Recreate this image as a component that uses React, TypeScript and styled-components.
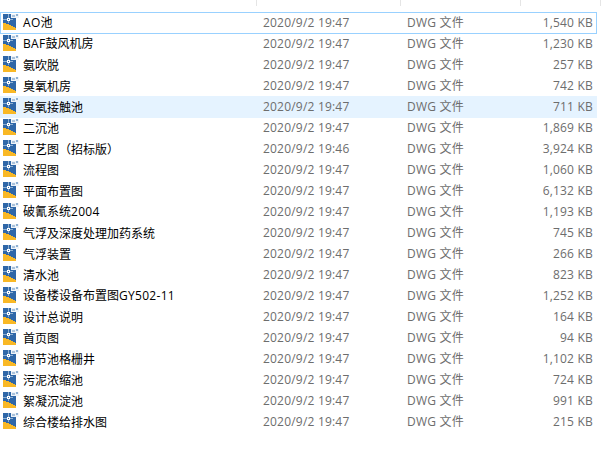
import * as React from "react";
import styled, { createGlobalStyle } from "styled-components";

interface FileRow {
	name: string;
	modified: string;
	size: string;
}

const files: FileRow[] = [
	{ name: "AO池", modified: "2020/9/2 19:47", size: "1,540 KB" },
	{ name: "BAF鼓风机房", modified: "2020/9/2 19:47", size: "1,230 KB" },
	{ name: "氨吹脱", modified: "2020/9/2 19:47", size: "257 KB" },
	{ name: "臭氧机房", modified: "2020/9/2 19:47", size: "742 KB" },
	{ name: "臭氧接触池", modified: "2020/9/2 19:47", size: "711 KB" },
	{ name: "二沉池", modified: "2020/9/2 19:47", size: "1,869 KB" },
	{ name: "工艺图（招标版）", modified: "2020/9/2 19:46", size: "3,924 KB" },
	{ name: "流程图", modified: "2020/9/2 19:47", size: "1,060 KB" },
	{ name: "平面布置图", modified: "2020/9/2 19:47", size: "6,132 KB" },
	{ name: "破氰系统2004", modified: "2020/9/2 19:47", size: "1,193 KB" },
	{ name: "气浮及深度处理加药系统", modified: "2020/9/2 19:47", size: "745 KB" },
	{ name: "气浮装置", modified: "2020/9/2 19:47", size: "266 KB" },
	{ name: "清水池", modified: "2020/9/2 19:47", size: "823 KB" },
	{ name: "设备楼设备布置图GY502-11", modified: "2020/9/2 19:47", size: "1,252 KB" },
	{ name: "设计总说明", modified: "2020/9/2 19:47", size: "164 KB" },
	{ name: "首页图", modified: "2020/9/2 19:47", size: "94 KB" },
	{ name: "调节池格栅井", modified: "2020/9/2 19:47", size: "1,102 KB" },
	{ name: "污泥浓缩池", modified: "2020/9/2 19:47", size: "724 KB" },
	{ name: "絮凝沉淀池", modified: "2020/9/2 19:47", size: "991 KB" },
	{ name: "综合楼给排水图", modified: "2020/9/2 19:47", size: "215 KB" },
];

const GlobalStyle = createGlobalStyle`
	html, body {
		background: #fff;
		height: 100%;
		margin: 0;
		overflow: hidden;
	}
`;

const Page = styled.div`
	box-sizing: border-box;
	font-family: "Noto Sans CJK SC", "Liberation Sans", sans-serif;
	font-size: 12px;
	height: 451px;
	width: 611px;
`;

const Header = styled.div`
	display: grid;
	grid-template-columns: 257px 144px 120px 80px;
	height: 6px;
	margin-bottom: 6px;
`;

const HeaderCell = styled.div`
	border-right: 1px solid #e5e5e5;
`;

const List = styled.div`
	display: flex;
	flex-direction: column;
	width: 597px;
`;

const Row = styled.div<{ $state?: "focused" | "hover" }>`
	align-items: center;
	background: ${(p) => (p.$state === "hover" ? "#e5f3ff" : "transparent")};
	border: 1px solid ${(p) => (p.$state === "focused" ? "#99d1ff" : "transparent")};
	box-sizing: border-box;
	display: grid;
	grid-template-columns: 253px 144px 114px 1fr;
	height: 22px;
	padding-bottom: 2px;
	padding-right: 3px;

	& + & {
		margin-top: -1px;
	}
`;

const NameCell = styled.div`
	align-items: center;
	color: #000;
	display: flex;
	gap: 4px;
	padding-left: 2px;
	white-space: nowrap;
`;

const Latin = styled.span`
	font-family: "Open Sans", sans-serif;
	letter-spacing: 0.3px;
`;

const InfoCell = styled.div<{ $right?: boolean }>`
	color: #6d6d6d;
	font-family: "Open Sans", "Noto Sans CJK SC", sans-serif;
	letter-spacing: 0.2px;
	padding-left: 9px;
	text-align: ${(p) => (p.$right ? "right" : "left")};
	white-space: nowrap;
`;

const IconSvg = styled.svg`
	display: block;
	flex: none;
`;

const DwgIcon = () => (
	<IconSvg width="16" height="16" viewBox="0 0 16 16" shapeRendering="crispEdges">
		<rect x="0" y="0" width="13" height="16" fill="#2f67a8" />
		<polygon points="0,9 3,9 3,10 6,10 6,11 8,11 8,12 10,12 10,13 12,13 12,14 13,14 13,16 0,16" fill="#f9b825" />
		<rect x="8" y="0" width="8" height="4" fill="#eef3f8" />
		<rect x="9" y="1" width="3" height="2" fill="#a9c2dc" />
		<rect x="13" y="0" width="2" height="2" fill="#8fb0d2" />
		<rect x="5" y="0" width="1" height="9" fill="#8fb0d2" />
		<rect x="0" y="5" width="10" height="1" fill="#8fb0d2" />
		<rect x="4" y="4" width="3" height="3" fill="#fff" />
		<rect x="5" y="5" width="1" height="1" fill="#2f67a8" />
	</IconSvg>
);

// names mix CJK with latin runs, which are set a bit wider in the reference
const FileName = ({ name }: { name: string }) => (
	<span>
		{name.split(/([A-Za-z0-9-]+)/).map((part, i) =>
			i % 2 === 1 ? <Latin key={i}>{part}</Latin> : part
		)}
	</span>
);

export default function App() {
	return (
		<Page>
			<GlobalStyle />
			<Header>
				<HeaderCell />
				<HeaderCell />
				<HeaderCell />
				<HeaderCell />
			</Header>
			<List>
				{files.map((file, i) => (
					<Row key={file.name} $state={i === 0 ? "focused" : i === 4 ? "hover" : undefined}>
						<NameCell>
							<DwgIcon />
							<FileName name={file.name} />
						</NameCell>
						<InfoCell>{file.modified}</InfoCell>
						<InfoCell>DWG 文件</InfoCell>
						<InfoCell $right>{file.size}</InfoCell>
					</Row>
				))}
			</List>
		</Page>
	);
}
